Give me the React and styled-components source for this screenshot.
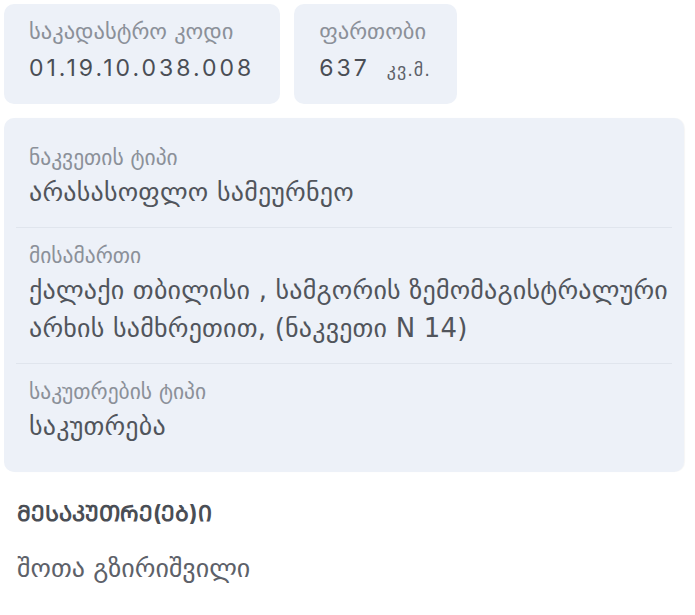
import React from "react";
import styled, { createGlobalStyle } from "styled-components";

const Global = createGlobalStyle`
  html, body { margin: 0; padding: 0; background: #ffffff; }
  body { font-family: "DejaVu Sans", "Inter", sans-serif; }
`;

const Page = styled.div`
  padding: 4px 11px 0 4px;
  display: flex;
  flex-direction: column;
`;

const CardRow = styled.div`
  display: flex;
  gap: 14px;
`;

const Card = styled.div`
  background: #edf1f8;
  border-radius: 10px;
  height: 100px;
  box-sizing: border-box;
  padding: 15px 26px 0 25px;
  display: flex;
  flex-direction: column;
`;

const CardLabel = styled.div`
  font-size: 22.5px;
  line-height: 24px;
  color: #8b9099;
  white-space: nowrap;
`;

const CardValue = styled.div`
  margin-top: 9px;
  font-family: "Inter", "DejaVu Sans", sans-serif;
  font-size: 23px;
  letter-spacing: 3px;
  line-height: 32px;
  color: #4a4e55;
  display: flex;
  align-items: baseline;
  white-space: nowrap;
`;

const Unit = styled.span`
  font-family: "DejaVu Sans", sans-serif;
  font-size: 18px;
  letter-spacing: 1px;
  margin-left: 17px;
  color: #5d6169;
`;

const Panel = styled.div`
  margin-top: 14px;
  background: #edf1f8;
  border-radius: 10px;
  padding: 12px 0 11px;
  box-shadow: 1px 0 1px rgba(0, 0, 0, 0.04);
  display: flex;
  flex-direction: column;
`;

const Row = styled.div`
  padding: 16px 4px 16px 25px;
`;

const Divider = styled.div`
  height: 1px;
  margin: 0 12px;
  background: #e0e5ed;
`;

const Label = styled.div`
  font-size: 21.5px;
  line-height: 24px;
  color: #8b9099;
`;

const Value = styled.div`
  margin-top: 3px;
  font-size: 26px;
  letter-spacing: 0.2px;
  line-height: 38px;
  color: #51555c;
`;

const SectionTitle = styled.div`
  margin: 26px 0 0 13px;
  font-family: "Inter", "DejaVu Sans", sans-serif;
  font-size: 22px;
  line-height: 30px;
  font-weight: bold;
  color: #4a4e55;
`;

const Owner = styled.div`
  margin: 25px 0 0 13px;
  font-size: 26px;
  line-height: 30px;
  color: #5d6169;
`;

export default function App() {
  return (
    <>
      <Global />
      <Page>
        <CardRow>
          <Card>
            <CardLabel>საკადასტრო კოდი</CardLabel>
            <CardValue>01.19.10.038.008</CardValue>
          </Card>
          <Card>
            <CardLabel>ფართობი</CardLabel>
            <CardValue>
              637<Unit>კვ.მ.</Unit>
            </CardValue>
          </Card>
        </CardRow>
        <Panel>
          <Row>
            <Label>ნაკვეთის ტიპი</Label>
            <Value>არასასოფლო სამეურნეო</Value>
          </Row>
          <Divider />
          <Row>
            <Label>მისამართი</Label>
            <Value>
              ქალაქი თბილისი , სამგორის ზემომაგისტრალური არხის სამხრეთით, (ნაკვეთი N 14)
            </Value>
          </Row>
          <Divider />
          <Row>
            <Label>საკუთრების ტიპი</Label>
            <Value>საკუთრება</Value>
          </Row>
        </Panel>
        <SectionTitle>ᲛᲔᲡᲐᲙᲣᲗᲠᲔ(ᲔᲑ)Ი</SectionTitle>
        <Owner>შოთა გზირიშვილი</Owner>
      </Page>
    </>
  );
}
